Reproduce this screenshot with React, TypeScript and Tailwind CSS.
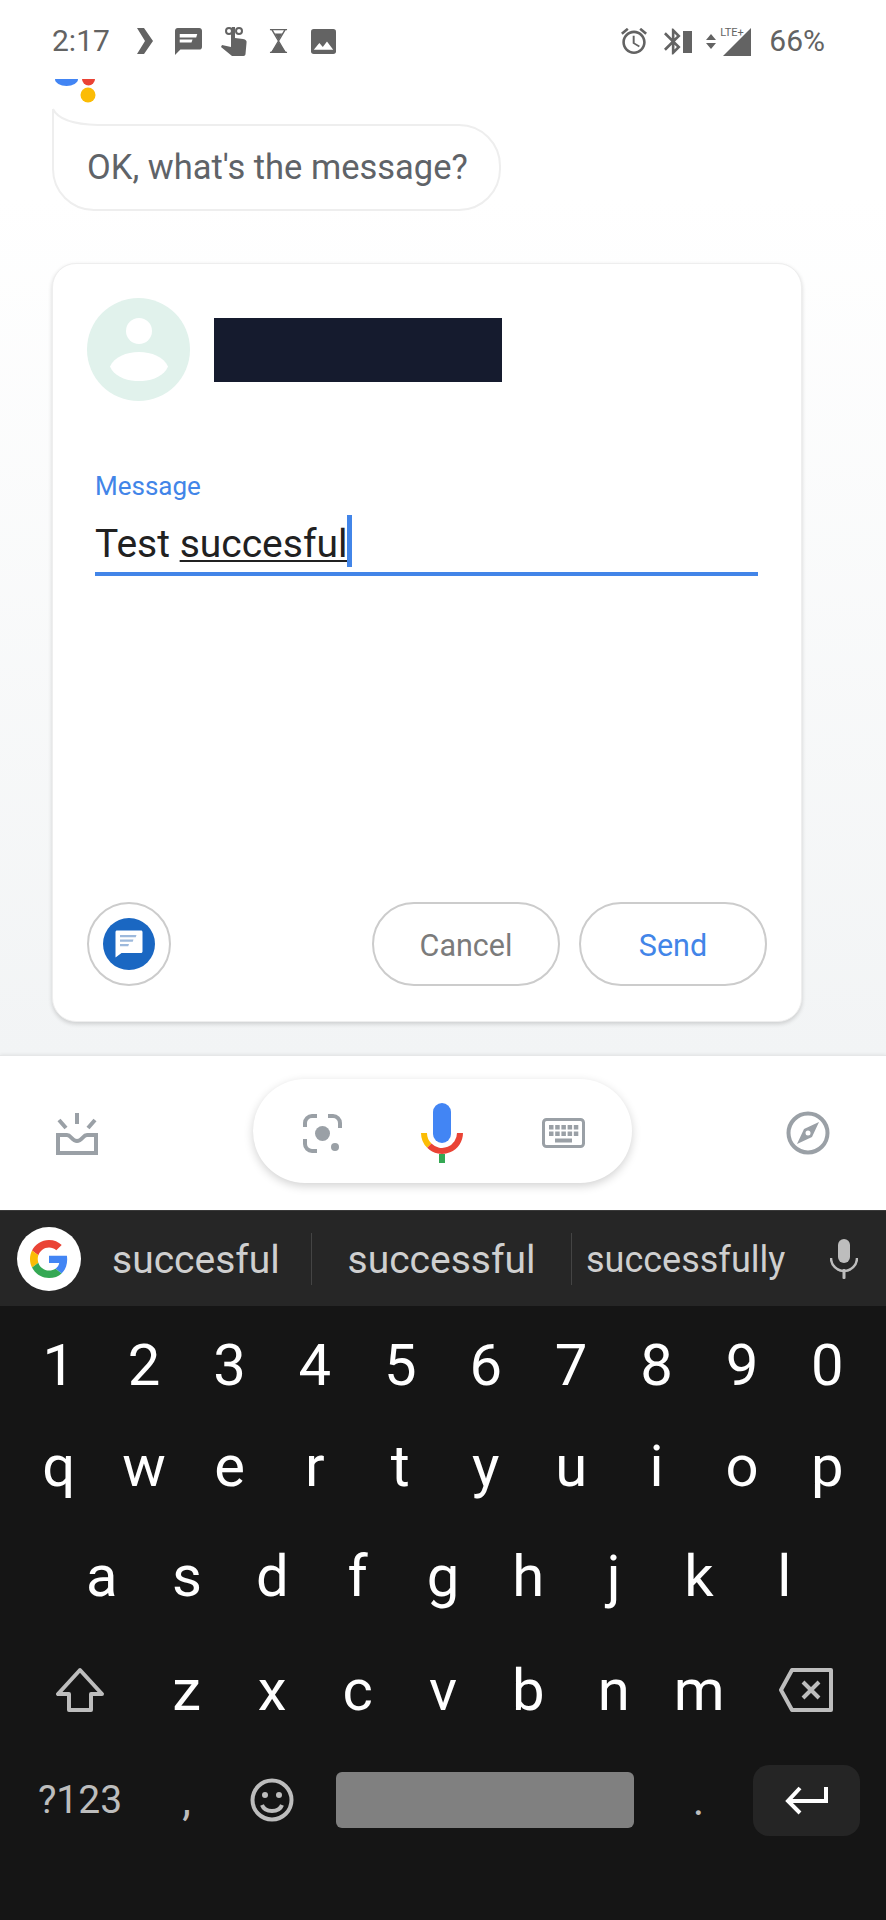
const grey = "#636363";

function Row({ keys, className }: { keys: string; className: string }) {
  return (
    <div className={`flex ${className}`}>
      {keys.split("").map((k) => (
        <div key={k} className="flex-1 flex items-center justify-center text-[58px] leading-none text-white">
          {k}
        </div>
      ))}
    </div>
  );
}

function StatusBar() {
  return (
    <div className="h-[79px] pt-[24px] pl-[52px] pr-[61px] flex items-start text-[#636363]">
      <span className="text-[30px] leading-[34px] mr-[27px]">2:17</span>
      <div className="flex items-center h-[34px]">
        <svg width="16" height="26" viewBox="0 0 16 26" fill={grey}><path d="M0 0h7l9 13-9 13H0l8-13z" /></svg>
        <svg width="27" height="27" viewBox="2 2 20 20" fill={grey} className="ml-[22px]">
          <path d="M20 2H4c-1.1 0-2 .9-2 2v18l4-4h14c1.1 0 2-.9 2-2V4c0-1.1-.9-2-2-2z" />
          <path d="M5.5 6.5h13l-.8 2.5H5.5zM5.5 10.5H15l-.8 2.2H5.500z" fill="#fff" />
        </svg>
        <svg width="26" height="30" viewBox="0 0 26 30" fill={grey} className="ml-[19px]">
          <circle cx="8" cy="5" r="3" fill="none" stroke={grey} strokeWidth="2" />
          <circle cx="18" cy="5" r="3" fill="none" stroke={grey} strokeWidth="2" />
          <path d="M11 1h3v11l8 1c3 .5 4 2 3.5 4l-1 11c0 1-1 2-2 2H11L0 21l1-2 9 2V4z" />
        </svg>
        <svg width="19" height="26" viewBox="0 0 20 26" fill={grey} className="ml-[22px]">
          <path d="M1 1h18M1 25h18M3 1l7 12-7 12M17 1l-7 12 7 12" fill="none" stroke={grey} strokeWidth="1.5" />
          <path d="M6 5h8l-4 7zM10 14l8 11H2z" />
        </svg>
        <svg width="25" height="25" viewBox="3 3 18 18" className="ml-[23px]">
          <rect x="3" y="3" width="18" height="18" rx="2" fill={grey} />
          <path d="M5 18l4-5 2.5 3 3-4 4.500 6z" fill="#fff" />
        </svg>
      </div>
      <div className="ml-auto flex items-center h-[34px]">
        <svg width="26" height="26" viewBox="2 2 20 20" fill={grey}>
          <path d="M22 5.72l-4.6-3.86-1.29 1.53 4.6 3.86L22 5.72zM7.88 3.39L6.6 1.86 2 5.71l1.29 1.53 4.59-3.85zM12.5 8H11v6l4.75 2.85.75-1.23-4-2.37V8zM12 4c-4.97 0-9 4.03-9 9s4.02 9 9 9c4.97 0 9-4.03 9-9s-4.03-9-9-9zm0 16c-3.87 0-7-3.13-7-7s3.13-7 7-7 7 3.13 7 7-3.13 7-7 7z" />
        </svg>
        <svg width="17" height="27" viewBox="5 2 13 20" fill={grey} className="ml-[17px]">
          <path d="M17.71 7.71L12 2h-1v7.59L6.41 5 5 6.41 10.59 12 5 17.59 6.41 19 11 14.41V22h1l5.71-5.71-4.3-4.29 4.3-4.29zM13 5.83l1.88 1.88L13 9.59V5.83zm1.88 10.46L13 18.17v-3.76l1.88 1.88z" />
        </svg>
        <div className="w-[9px] h-[22px] bg-[#636363] ml-[2px] mt-[2px]" />
        <svg width="10" height="15" viewBox="0 0 10 15" fill={grey} className="ml-[14px]">
          <path d="M5 0l5 6H0zM5 15l5-6H0z" />
        </svg>
        <div className="relative w-[28px] h-[28px] ml-[7px] mt-[1px]">
          <svg width="28" height="28" viewBox="0 0 28 28" fill={grey}><path d="M28 0v28H0z" /></svg>
          <span className="absolute left-[-3px] top-[-2px] text-[11px] leading-[13px]">LTE+</span>
        </div>
        <span className="text-[30px] leading-[34px] ml-[18px]">66%</span>
      </div>
    </div>
  );
}

function AssistantDots() {
  return (
    <div className="h-[24px] pl-[55px]">
      <svg width="42" height="24" viewBox="0 0 42 24">
        <path d="M0 0h23a11.5 7 0 0 1-23 0z" fill="#4285f4" />
        <path d="M27 0h13a6.5 6.5 0 0 1-13 0z" fill="#ea4335" />
        <circle cx="33" cy="16" r="7.5" fill="#fbbc05" />
      </svg>
    </div>
  );
}

function BottomBar() {
  return (
    <div className="h-[155px] bg-white border-t border-[#e6e7e8] flex items-center px-[56px] justify-between shadow-[0_-1px_3px_rgba(0,0,0,0.06)]">
      <svg width="43" height="44" viewBox="0 0 43 44" fill="none" stroke="#9aa0a6" strokeWidth="4">
        <path d="M21 2v11M3 9l7 8M39 9l-7 8" />
        <path d="M2 24h9c4 0 5 6 10 6s6-6 10-6h9v18H2z" />
      </svg>
      <div className="w-[379px] h-[104px] mb-[4px] pt-[4px] rounded-full bg-white shadow-[0_3px_10px_rgba(0,0,0,0.18)] flex items-center justify-between pl-[50px] pr-[47px]">
        <svg width="39" height="39" viewBox="0 0 39 39" fill="none" stroke="#9aa0a6" strokeWidth="4">
          <path d="M2 13V9a7 7 0 0 1 7-7h5M25 2h5a7 7 0 0 1 7 7v5M2 25v5a7 7 0 0 0 7 7h5" />
          <circle cx="19.5" cy="19.5" r="7.5" fill="#9aa0a6" stroke="none" />
          <circle cx="32" cy="33" r="4" fill="#9aa0a6" stroke="none" />
        </svg>
        <svg width="42" height="60" viewBox="0 0 42 60" fill="none">
          <path d="M3 30a18 18 0 0 0 5.3 12.7" stroke="#fbbc05" strokeWidth="6" />
          <path d="M8.3 42.7A18 18 0 0 0 39 30" stroke="#ea4335" strokeWidth="6" />
          <rect x="18" y="51" width="6" height="9" fill="#34a853" />
          <rect x="12" y="0" width="18" height="40" rx="9" fill="#4285f4" />
        </svg>
        <svg width="43" height="30" viewBox="0 0 43 30" fill="#9aa0a6">
          <rect x="1.5" y="1.5" width="40" height="27" rx="3" fill="#fff" stroke="#9aa0a6" strokeWidth="3" />
          {[7, 13.5].map((y) =>
            [7, 13.2, 19.4, 25.6, 31.8].map((x) => <rect key={`${x}-${y}`} x={x} y={y} width="4.5" height="4.5" />),
          )}
          <rect x="13" y="20.5" width="17" height="4" />
        </svg>
      </div>
      <svg width="44" height="44" viewBox="0 0 44 44" fill="none">
        <circle cx="22" cy="22" r="19.5" stroke="#9aa0a6" strokeWidth="4" />
        <path d="M33 11l-7 15-15 7 7-15z" fill="#9aa0a6" />
        <circle cx="22" cy="22" r="2.5" fill="#fff" />
      </svg>
    </div>
  );
}

function Suggestions() {
  return (
    <div className="h-[96px] pt-[3px] bg-[#262626] border-t border-[#3a3a3a] flex items-center pl-[17px] text-[39px] text-[#cfcfcf]">
      <div className="w-[64px] h-[64px] -mt-[3px] rounded-full bg-white flex items-center justify-center shrink-0">
        <svg width="38" height="38" viewBox="0 0 48 48">
          <path fill="#EA4335" d="M24 9.5c3.54 0 6.71 1.22 9.21 3.6l6.85-6.85C35.9 2.38 30.47 0 24 0 14.62 0 6.51 5.38 2.56 13.22l7.98 6.19C12.43 13.72 17.74 9.5 24 9.5z" />
          <path fill="#4285F4" d="M46.98 24.55c0-1.57-.15-3.09-.38-4.55H24v9.02h12.94c-.58 2.96-2.26 5.48-4.78 7.18l7.73 6c4.51-4.18 7.09-10.36 7.09-17.65z" />
          <path fill="#FBBC05" d="M10.53 28.59c-.48-1.45-.76-2.99-.76-4.59s.27-3.14.76-4.59l-7.98-6.19C.92 16.46 0 20.12 0 24c0 3.88.92 7.54 2.56 10.78l7.97-6.19z" />
          <path fill="#34A853" d="M24 48c6.48 0 11.93-2.13 15.89-5.81l-7.73-6c-2.15 1.45-4.92 2.3-8.16 2.3-6.26 0-11.57-4.22-13.47-9.91l-7.98 6.19C6.51 42.62 14.62 48 24 48z" />
        </svg>
      </div>
      <div className="w-[230px] pl-[31px] shrink-0">succesful</div>
      <div className="w-[1px] h-[52px] -mt-[3px] bg-[#444444] shrink-0" />
      <div className="w-[259px] text-center shrink-0">successful</div>
      <div className="w-[1px] h-[52px] -mt-[3px] bg-[#444444] shrink-0" />
      <div className="pl-[14px] text-[36px] shrink-0">successfully</div>
      <svg width="28" height="40" viewBox="0 0 28 40" fill="#bdbdbd" className="ml-[45px] -mt-[3px] shrink-0">
        <rect x="8" y="0" width="12" height="24" rx="6" />
        <path d="M1 19a13 13 0 0 0 26 0" fill="none" stroke="#bdbdbd" strokeWidth="2.5" />
        <rect x="12.5" y="30" width="3" height="10" rx="1" />
      </svg>
    </div>
  );
}

function Keyboard() {
  return (
    <div className="h-[614px] bg-[#151515] px-[16px] pt-[13px]">
      <Row keys="1234567890" className="h-[92px]" />
      <Row keys="qwertyuiop" className="h-[110px]" />
      <Row keys="asdfghjkl" className="h-[110px] px-[43px]" />
      <div className="h-[118px] flex">
        <div className="w-[128px] flex items-center justify-center">
          <svg width="48" height="46" viewBox="0 0 48 46" fill="none" stroke="#bdbdbd" strokeWidth="4" strokeLinejoin="round">
            <path d="M24 3L2 27h11v16h22V27h11z" />
          </svg>
        </div>
        <Row keys="zxcvbnm" className="w-[598px]" />
        <div className="flex-1 flex items-center justify-center">
          <svg width="54" height="44" viewBox="0 0 54 44" fill="none" stroke="#bdbdbd" strokeWidth="4" strokeLinejoin="round">
            <path d="M13 2h39v40H13L2 22z" />
            <path d="M24 14l16 16M40 14L24 30" />
          </svg>
        </div>
      </div>
      <div className="h-[102px] flex items-center">
        <div className="w-[128px] text-center text-[39px] text-[#bdbdbd]">?123</div>
        <div className="w-[85px] text-center text-[44px] text-[#bdbdbd]">,</div>
        <div className="w-[85px] flex justify-center">
          <svg width="44" height="44" viewBox="0 0 44 44" fill="none" stroke="#bdbdbd" strokeWidth="4">
            <circle cx="22" cy="22" r="19.5" />
            <path d="M12 27c3 8 17 8 20 0" />
            <circle cx="15" cy="17" r="3" fill="#bdbdbd" stroke="none" />
            <circle cx="29" cy="17" r="3" fill="#bdbdbd" stroke="none" />
          </svg>
        </div>
        <div className="w-[298px] h-[56px] ml-[22px] rounded-[6px] bg-[#808080]" />
        <div className="w-[119px] pl-[10px] text-center text-[44px] text-[#bdbdbd]">.</div>
        <div className="w-[107px] h-[71px] rounded-[16px] bg-[#252525] flex items-center justify-center">
          <svg width="44" height="30" viewBox="0 0 44 30" fill="none" stroke="#fff" strokeWidth="4">
            <path d="M41 2v14H4M15 3L3 16l12 12" />
          </svg>
        </div>
      </div>
    </div>
  );
}

export default function App() {
  return (
    <div className="w-[886px] h-[1920px] flex flex-col overflow-hidden bg-white font-['Roboto',sans-serif]">
      <StatusBar />
      <AssistantDots />
      <div className="flex-1 bg-gradient-to-b from-white via-white via-[10%] to-[#f2f4f5] px-[52px] pt-[21px]">
        <div className="relative w-[449px] h-[87px] rounded-[42px] rounded-tl-none border-2 border-[#eeeeee] bg-white flex items-center pl-[33px] text-[34.5px] text-[#5f6368]">
          <svg width="52" height="21" viewBox="0 0 52 21" className="absolute left-[-2px] top-[-19px]">
            <rect width="52" height="21" fill="#fff" />
            <path d="M1 2v19M1 2Q8 17 46 18h6" fill="none" stroke="#eeeeee" strokeWidth="2" />
          </svg>
          OK, what's the message?
        </div>
        <div className="mt-[52px] w-[750px] h-[759px] rounded-[24px] bg-white border border-[#eeeeee] shadow-[0_2px_4px_rgba(0,0,0,0.16)] flex flex-col px-[34px] pt-[34px] pb-[35px]">
          <div className="flex items-center gap-[24px]">
            <div className="w-[103px] h-[103px] rounded-full bg-[#e1f2ec] flex items-center justify-center">
              <svg width="58" height="63" viewBox="0 0 58 63" fill="#fff">
                <circle cx="29" cy="13" r="13" />
                <path d="M0 48.5C8 29 50 29 58 48.5 50 68 8 68 0 48.5z" />
              </svg>
            </div>
            <div className="w-[288px] h-[64px] bg-[#151b2e]" />
          </div>
          <div className="mt-[69px] ml-[8px] w-[663px] flex flex-col flex-1">
            <div className="text-[26px] leading-[32px] text-[#4285e8]">Message</div>
            <div className="mt-[8px] h-[66px] border-b-[4px] border-[#4285e8] text-[39px] leading-[46px] text-[#212121] flex items-start">
              <span className="mt-[11px] whitespace-pre">Test </span>
              <span className="mt-[11px] underline underline-offset-[3px] decoration-2">succesful</span>
              <span className="w-[5px] h-[52px] mt-[5px] bg-[#4285e8]" />
            </div>
          </div>
          <div className="flex items-center">
            <div className="w-[84px] h-[84px] rounded-full border-2 border-[#cccccc] flex items-center justify-center">
              <div className="w-[52px] h-[52px] rounded-full bg-[#1a67c2] flex items-center justify-center">
                <svg width="30" height="30" viewBox="2 2 20 20">
                  <path fill="#fff" d="M20 3H4c-.6 0-1 .4-1 1v17l4-3h13c.6 0 1-.4 1-1V4c0-.6-.4-1-1-1z" />
                  <path fill="#9db9dc" d="M6 6h11l-.5 1.5H6zM6 9h9l-.5 1.5H6zM6 12h6l-.5 1.5H6z" />
                </svg>
              </div>
            </div>
            <div className="ml-auto flex gap-[19px]">
              <div className="w-[188px] h-[84px] pt-[3px] rounded-full border-2 border-[#cccccc] flex items-center justify-center text-[30.5px] text-[#7b7b7b]">Cancel</div>
              <div className="w-[188px] h-[84px] pt-[3px] rounded-full border-2 border-[#cccccc] flex items-center justify-center text-[30.5px] text-[#4285e8]">Send</div>
            </div>
          </div>
        </div>
      </div>
      <BottomBar />
      <Suggestions />
      <Keyboard />
    </div>
  );
}
